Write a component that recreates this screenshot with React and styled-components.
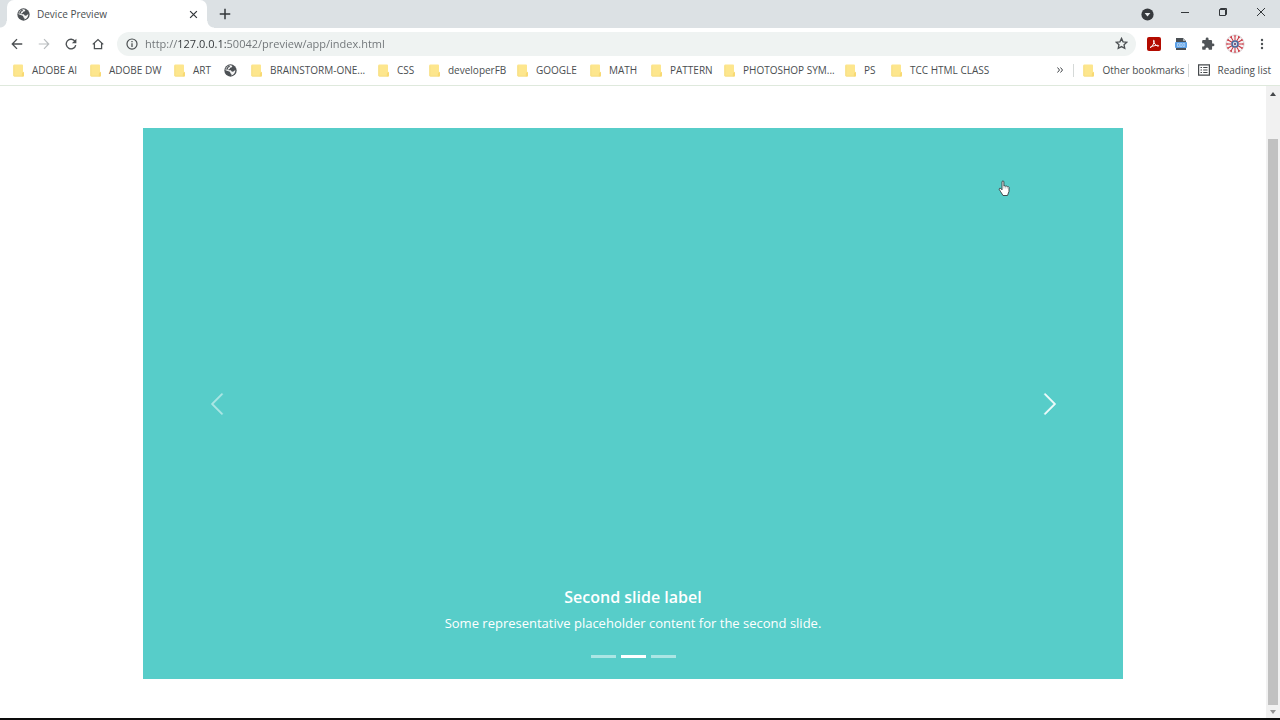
import React, { useState } from "react";
import styled, { createGlobalStyle } from "styled-components";

const GlobalStyle = createGlobalStyle`
  * { box-sizing: border-box; }
  body {
    margin: 0;
    background: #fff;
    color: #4a4e50;
    font-family: "Open Sans", "Noto Sans", sans-serif;
    font-size: 10px;
  }
  button, input { font: inherit; color: inherit; }
  button { border: 0; padding: 0; background: none; }
  a { color: inherit; text-decoration: none; }
`;

const Browser = styled.div`
  display: flex;
  flex-direction: column;
  min-height: 100vh;
  border-bottom: 2px solid #0c0c0c;
`;

const TabStrip = styled.header`
  display: flex;
  height: 28px;
  padding-left: 7px;
  background: #dce1e4;
`;

const Tab = styled.div`
  position: relative;
  display: flex;
  align-items: center;
  gap: 7px;
  width: 200px;
  padding: 0 8px 0 10px;
  border-radius: 7px 7px 0 0;
  background: #fff;
  &::before, &::after {
    content: "";
    position: absolute;
    bottom: 0;
    width: 7px;
    height: 7px;
  }
  &::before {
    left: -7px;
    background: radial-gradient(circle at 0 0, transparent 6px, #fff 7px);
  }
  &::after {
    right: -7px;
    background: radial-gradient(circle at 100% 0, transparent 6px, #fff 7px);
  }
`;

const TabTitle = styled.span`
  flex: 1;
  line-height: 14px;
`;

const IconButton = styled.button`
  display: flex;
  align-items: center;
  justify-content: center;
  flex: none;
  width: ${(p) => p.$width || 26}px;
  height: ${(p) => p.$height || 24}px;
  color: ${(p) => p.$color || "#4c5053"};
`;

const WindowControls = styled.div`
  display: flex;
  gap: 2px;
  margin-left: auto;
  padding-right: 1px;
`;

const Toolbar = styled.nav`
  display: flex;
  align-items: center;
  gap: 1px;
  height: 31px;
  padding: 0 5px 0 4px;
`;

const AddressBar = styled.form`
  display: flex;
  align-items: center;
  flex: 1;
  height: 24px;
  margin: 0 4px 0 5px;
  padding: 0 2px 0 9px;
  border-radius: 12px;
  background: #eff3f2;
`;

const AddressInput = styled.input`
  flex: 1;
  min-width: 0;
  height: 22px;
  margin-left: 7px;
  padding: 0;
  border: 0;
  outline: 0;
  font-size: 11px;
  background: linear-gradient(90deg, #6d7275 33px, #303437 33px 81px, #6d7275 81px);
  background-clip: text;
  -webkit-text-fill-color: transparent;
`;

const BookmarkBar = styled.nav`
  display: flex;
  align-items: center;
  height: 27px;
  padding: 0 9px 4px 13px;
  border-bottom: 1px solid #dfe9dd;
`;

const BookmarkList = styled.div`
  display: flex;
  flex: 1;
`;

const Bookmark = styled.a`
  display: flex;
  align-items: center;
  gap: 7px;
  flex: none;
  width: ${(p) => (p.$width ? `${p.$width}px` : "auto")};
  line-height: 14px;
  white-space: nowrap;
`;

const Divider = styled.span`
  width: 1px;
  height: 13px;
  margin-right: 9px;
  background: #d5d9d8;
`;

const Viewport = styled.div`
  display: flex;
  flex: 1;
`;

const Page = styled.main`
  flex: 1;
  padding: 42px 143px 39px;
`;

const Carousel = styled.section`
  position: relative;
  display: grid;
  grid-template-columns: 15% 1fr 15%;
  aspect-ratio: 16 / 9;
  background: #57cdc9;
  color: #fff;
`;

const SlideArrow = styled.button`
  display: flex;
  align-items: center;
  justify-content: center;
  color: #fff;
  opacity: ${(p) => (p.$active ? 0.9 : 0.5)};
`;

const Caption = styled.div`
  display: flex;
  flex-direction: column;
  align-items: center;
  justify-content: flex-end;
  padding-bottom: 21px;
`;

const CaptionTitle = styled.h5`
  margin: 0 0 6px;
  font-size: 16px;
  font-weight: 600;
  line-height: 20px;
`;

const CaptionText = styled.p`
  margin: 0 0 22px;
  font-size: 13px;
  line-height: 20px;
`;

const Indicators = styled.div`
  display: flex;
  gap: 5px;
`;

const Indicator = styled.button`
  width: 25px;
  height: 3px;
  background: #fff;
  opacity: ${(p) => (p.$active ? 1 : 0.5)};
`;

const Pointer = styled.svg`
  position: absolute;
  top: 52px;
  right: 112px;
`;

const ScrollBar = styled.div`
  display: flex;
  flex-direction: column;
  align-items: center;
  width: 14px;
  background: #f1f1f1;
`;

const ScrollTrack = styled.div`
  display: flex;
  flex: 1;
  width: 10px;
  padding-top: 38px;
`;

const ScrollThumb = styled.div`
  flex: 1;
  background: #c1c1c1;
`;

const Svg = ({ size = 16, children, ...rest }) => (
  <svg width={size} height={size} viewBox="0 0 16 16" fill="none" stroke="currentColor" strokeWidth="1.4" aria-hidden="true" {...rest}>
    {children}
  </svg>
);

const GlobeIcon = () => (
  <Svg size={13} stroke="none">
    <circle cx="8" cy="8" r="7.6" fill="#4d5155" />
    <path d="M8.2 1.6 10.4 2.4 9.2 4.2 7.4 4.6 7 6.2 5.4 6.6 5.6 7.8H8.4L9.8 9.4 11.6 9.2 13.9 7.4C14.2 10.4 12 13.4 9 14L9.2 12.4 7.8 11.4 7.6 9.8 5.6 8.8 1.9 7.8C2 4.4 4.8 1.8 8.2 1.6Z" fill="#fff" opacity=".95" />
    <path d="M3 5.2 5.6 2.6 7.4 2.4 6.8 3.8 5.2 4.6 4.6 6.8 3 7.4Z" fill="#4d5155" />
  </Svg>
);

const FolderIcon = () => (
  <svg width="12" height="13" viewBox="0 0 12 13" aria-hidden="true">
    <path d="M1.2.5h7.9q.9 0 .9.9v6l1 1v3.2q0 .9-.9.9H1.2q-.9 0-.9-.9V1.4q0-.9.9-.9Z" fill="#fde68d" />
    <path d="M.8 1.5v10q0 .6.6.6h8" fill="none" stroke="#f5dc82" strokeWidth=".8" />
    <path d="M8.8 10q0-1.6 1.7-1.8l.5.4v3q0 .9-.9.9H8.8Z" fill="#f8d974" />
  </svg>
);

const spokes = Array.from({ length: 12 }, (_, i) => i * 30);

const AvatarIcon = () => (
  <svg width="20" height="20" viewBox="0 0 20 20" aria-hidden="true">
    <circle cx="10" cy="10" r="9.2" fill="#f6f2f3" stroke="#c9bcc2" strokeWidth=".5" />
    {spokes.map((a) => (
      <path key={a} transform={`rotate(${a} 10 10)`} d="M10 6.5V3M9.2 1.3 10 2.8l.8-1.5" stroke="#c9343f" strokeWidth="1" fill="none" />
    ))}
    <circle cx="10" cy="10" r="3" fill="#dbe4ef" stroke="#44679a" strokeWidth="1.5" />
    <circle cx="10" cy="10" r="1.2" fill="#7d5a7e" />
  </svg>
);

const bookmarks = [
  { name: "ADOBE AI", width: 77 },
  { name: "ADOBE DW", width: 84 },
  { name: "ART", width: 50 },
  { width: 27 },
  { name: "BRAINSTORM-ONE...", width: 127 },
  { name: "CSS", width: 51 },
  { name: "developerFB", width: 88 },
  { name: "GOOGLE", width: 73 },
  { name: "MATH", width: 61 },
  { name: "PATTERN", width: 73 },
  { name: "PHOTOSHOP SYM...", width: 121 },
  { name: "PS", width: 46 },
  { name: "TCC HTML CLASS", width: 105 },
];

const slides = ["First slide", "Second slide", "Third slide"];

export default function App() {
  const [url, setUrl] = useState("http://127.0.0.1:50042/preview/app/index.html");
  return (
    <Browser>
      <GlobalStyle />
      <TabStrip>
        <Tab>
          <GlobeIcon />
          <TabTitle>Device Preview</TabTitle>
          <IconButton $width={12} aria-label="Close tab" $color="#33373a">
            <Svg size={9}><path d="m2 2 12 12M14 2 2 14" strokeWidth="2.2" /></Svg>
          </IconButton>
        </Tab>
        <IconButton $width={36} $height={28} aria-label="New tab" $color="#33373a">
          <Svg size={12}><path d="M8 1v14M1 8h14" strokeWidth="2" /></Svg>
        </IconButton>
        <WindowControls>
          <IconButton $width={36} $height={28} aria-label="Search tabs">
            <Svg size={13} stroke="none"><circle cx="8" cy="8" r="7.5" fill="#36393d" /><path d="M4.5 6h7L8 10.5Z" fill="#e8ebed" /></Svg>
          </IconButton>
          <IconButton $width={36} aria-label="Minimize" $color="#33373a">
            <svg width="10" height="10" aria-hidden="true"><path d="M1 5.5h8" stroke="currentColor" /></svg>
          </IconButton>
          <IconButton $width={36} aria-label="Restore" $color="#33373a">
            <svg width="10" height="10" fill="none" stroke="currentColor" aria-hidden="true"><path d="M1.5 2.5h6v6h-6ZM2.5 2.5v-1h6v6h-1" /></svg>
          </IconButton>
          <IconButton $width={36} aria-label="Close" $color="#33373a">
            <svg width="10" height="10" aria-hidden="true"><path d="m1 1 8 8m0-8-8 8" stroke="currentColor" /></svg>
          </IconButton>
        </WindowControls>
      </TabStrip>

      <Toolbar aria-label="Browser toolbar">
        <IconButton aria-label="Back">
          <Svg size={12}><path d="M15 8H2M8 1.5 1.7 8 8 14.5" strokeWidth="1.8" /></Svg>
        </IconButton>
        <IconButton aria-label="Forward" $color="#b9bdbf">
          <Svg size={12}><path d="M1 8h13M8 1.5 14.3 8 8 14.5" strokeWidth="1.6" /></Svg>
        </IconButton>
        <IconButton aria-label="Reload">
          <Svg size={12}><path d="M13.3 4.4A6.4 6.4 0 1 0 14.3 9.4" strokeWidth="1.8" /><path d="M15.2 1v6H9.2Z" fill="currentColor" stroke="none" /></Svg>
        </IconButton>
        <IconButton aria-label="Home">
          <Svg size={12}><path d="M1 8.5 8 2l7 6.5M3.2 7v7.3h9.6V7" strokeWidth="1.7" /></Svg>
        </IconButton>
        <AddressBar onSubmit={(e) => e.preventDefault()}>
          <Svg size={12}><circle cx="8" cy="8" r="6.7" strokeWidth="1.6" /><path d="M8 7v5M8 4v1.8" strokeWidth="1.7" /></Svg>
          <AddressInput aria-label="Address" value={url} onChange={(e) => setUrl(e.target.value)} />
          <IconButton type="button" aria-label="Bookmark this page">
            <Svg size={13}><path d="m8 1.7 1.9 4.2 4.6.5-3.4 3.1.9 4.5L8 11.8 4 14l.9-4.5-3.4-3.1 4.6-.5Z" strokeWidth="1.6" /></Svg>
          </IconButton>
        </AddressBar>
        <IconButton aria-label="Adobe Acrobat">
          <svg width="14" height="14" viewBox="0 0 14 14" aria-hidden="true">
            <rect width="14" height="14" rx="2" fill="#b30b00" />
            <path d="M3 10.7c2-1 4.3-4.2 4.2-6.8 0-1-.9-1-.7.2.4 2.2 2.4 4.5 4.5 5.1 1.1.2 1-1-.5-.9-2.2.1-4.4.6-6.8 1.8Z" fill="none" stroke="#fff" />
          </svg>
        </IconButton>
        <IconButton aria-label="Download extension">
          <svg width="14" height="14" viewBox="0 0 14 14" aria-hidden="true">
            <path d="M2 1h7l3 3v9H2Z" fill="#4a4f54" />
            <path d="M9 1v3h3Z" fill="#aeb4b8" />
            <rect x="1" y="5" width="12" height="6" rx="1" fill="#5a9fe6" />
            <path d="M3.5 6.5v3h1.8v-3ZM6.2 6.5v3H8v-3ZM9 6.5v3h1.7v-3Z" fill="none" stroke="#c5def6" strokeWidth=".7" />
          </svg>
        </IconButton>
        <IconButton aria-label="Extensions">
          <svg width="14" height="14" viewBox="0 0 24 24" fill="#505458" aria-hidden="true">
            <path d="M20.5 11H19V7a2 2 0 0 0-2-2h-4V3.5a2.5 2.5 0 0 0-5 0V5H4a2 2 0 0 0-2 2v3.8h1.5a2.7 2.7 0 0 1 0 5.4H2V20a2 2 0 0 0 2 2h3.8v-1.5a2.7 2.7 0 0 1 5.4 0V22H17a2 2 0 0 0 2-2v-4h1.5a2.5 2.5 0 0 0 0-5Z" />
          </svg>
        </IconButton>
        <IconButton aria-label="Profile"><AvatarIcon /></IconButton>
        <IconButton aria-label="Menu">
          <svg width="4" height="12" fill="currentColor" aria-hidden="true"><circle cx="2" cy="2" r="1.2" /><circle cx="2" cy="6" r="1.2" /><circle cx="2" cy="10" r="1.2" /></svg>
        </IconButton>
      </Toolbar>

      <BookmarkBar aria-label="Bookmarks">
        <BookmarkList>
          {bookmarks.map(({ name, width }, i) =>
            name ? (
              <Bookmark key={i} href="#" $width={width}><FolderIcon />{name}</Bookmark>
            ) : (
              <Bookmark key={i} href="#" $width={width} aria-label="Website"><GlobeIcon /></Bookmark>
            )
          )}
        </BookmarkList>
        <IconButton $width={26} aria-label="More bookmarks">
          <svg width="6" height="6" fill="none" stroke="#3f4346" aria-hidden="true"><path d="m.5.5 2 2.5-2 2.5m3-5 2 2.5-2 2.5" /></svg>
        </IconButton>
        <Divider />
        <Bookmark href="#" $width={105}><FolderIcon />Other bookmarks</Bookmark>
        <Divider />
        <Bookmark href="#">
          <svg width="12" height="12" viewBox="0 0 12 12" fill="none" stroke="#45494c" aria-hidden="true"><path d="M.6.9h10.8v10.2H.6Z" strokeWidth="1.2" /><path d="M2.5 3.5H4M2.5 6H4M2.5 8.5H4M5.2 3.5h4.3M5.2 6h4.3M5.2 8.5h4.3" /></svg>
          Reading list
        </Bookmark>
      </BookmarkBar>

      <Viewport>
        <Page>
          <Carousel aria-label="Slides">
            <SlideArrow aria-label="Previous">
              <svg width="26" height="26" viewBox="0 0 16 16" fill="currentColor" stroke="currentColor" strokeWidth=".3" aria-hidden="true"><path d="M11.354 1.646a.5.5 0 0 1 0 .708L5.707 8l5.647 5.646a.5.5 0 0 1-.708.708l-6-6a.5.5 0 0 1 0-.708l6-6a.5.5 0 0 1 .708 0z" /></svg>
            </SlideArrow>
            <Caption>
              <CaptionTitle>Second slide label</CaptionTitle>
              <CaptionText>Some representative placeholder content for the second slide.</CaptionText>
              <Indicators>
                {slides.map((s, i) => <Indicator key={s} $active={i === 1} aria-label={s} />)}
              </Indicators>
            </Caption>
            <SlideArrow $active aria-label="Next">
              <svg width="26" height="26" viewBox="0 0 16 16" fill="currentColor" stroke="currentColor" strokeWidth=".3" aria-hidden="true"><path d="M4.646 1.646a.5.5 0 0 1 .708 0l6 6a.5.5 0 0 1 0 .708l-6 6a.5.5 0 0 1-.708-.708L10.293 8 4.646 2.354a.5.5 0 0 1 0-.708z" /></svg>
            </SlideArrow>
            <Pointer width="13" height="17" viewBox="0 0 13 17" aria-hidden="true">
              <path d="M4 1.5q1-1.2 1.9 0V6q1-.7 1.8.3 1-.6 1.7.3 1.1-.4 1.6.7v4.1l-1.5 4.1H5L2.7 11.8 1.1 9.2q.2-1.3 1.5-.8L4 9.8Z" fill="#fff" stroke="#333c40" strokeWidth=".9" />
              <path d="M5.9 6v2.5M7.7 6.5v2M9.4 6.8v1.8" stroke="#8f9a9c" strokeWidth=".5" />
            </Pointer>
          </Carousel>
        </Page>
        <ScrollBar>
          <IconButton $width={14} $height={15} aria-label="Scroll up"><svg width="6" height="4" aria-hidden="true"><path d="M0 4 3 0l3 4Z" fill="#45484b" /></svg></IconButton>
          <ScrollTrack><ScrollThumb /></ScrollTrack>
          <IconButton $width={14} $height={13} aria-label="Scroll down"><svg width="6" height="4" aria-hidden="true"><path d="m0 0 3 4 3-4Z" fill="#929292" /></svg></IconButton>
        </ScrollBar>
      </Viewport>
    </Browser>
  );
}
